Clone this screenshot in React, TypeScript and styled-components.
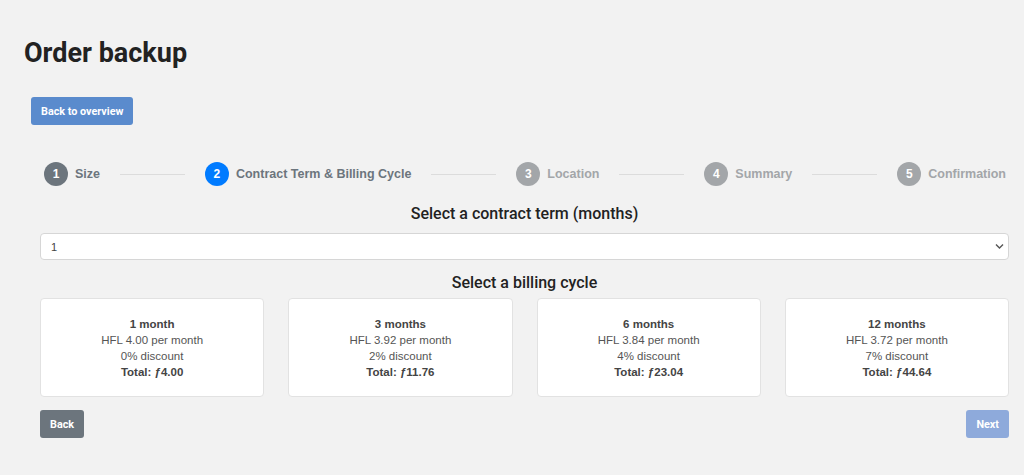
import React from "react";
import styled, { createGlobalStyle } from "styled-components";

const Global = createGlobalStyle`
  html, body { margin: 0; padding: 0; background: #f2f2f2; }
  body { font-family: "Liberation Sans", Arial, sans-serif; color: #212529; }
  * { box-sizing: border-box; }
`;

const Page = styled.div`
  padding: 34px 15px 0 24px;
  display: flex;
  flex-direction: column;
`;

const Title = styled.h1`
  margin: 0;
  font-family: "Roboto", "Noto Sans", sans-serif;
  font-size: 27px;
  font-weight: 700;
  color: #222;
  line-height: 38px;
`;

const Button = styled.button<{ $variant: "primary" | "secondary" | "disabled" }>`
  border: none;
  border-radius: 3px;
  font-family: "Roboto", "Noto Sans", sans-serif;
  font-size: 10.8px;
  font-weight: 700;
  color: #fff;
  height: 28px;
  padding: 0 10px;
  cursor: pointer;
  background: ${(p) =>
    p.$variant === "primary" ? "#5a8bcd" : p.$variant === "secondary" ? "#6c757d" : "#8eaadb"};
`;

const TopButtonRow = styled.div`
  margin-top: 25px;
  padding-left: 7px;
  display: flex;
`;

const Content = styled.div`
  margin-top: 35px;
  padding-left: 16px;
  display: flex;
  flex-direction: column;
`;

const Stepper = styled.div`
  display: flex;
  align-items: center;
  gap: 20px;
  padding: 0 3px 0 4px;
  height: 28px;
`;

const Step = styled.div`
  display: flex;
  align-items: center;
  gap: 7px;
`;

const Circle = styled.div<{ $state: "done" | "active" | "todo" }>`
  width: 24px;
  height: 24px;
  border-radius: 50%;
  display: flex;
  align-items: center;
  justify-content: center;
  color: #fff;
  font-size: 12px;
  font-weight: 700;
  background: ${(p) => (p.$state === "done" ? "#6c757d" : p.$state === "active" ? "#007bff" : "#a3a6a9")};
`;

const StepLabel = styled.span<{ $muted: boolean }>`
  font-size: 12.5px;
  font-weight: 700;
  color: ${(p) => (p.$muted ? "#a3a6a9" : "#6c757d")};
  white-space: nowrap;
`;

const Line = styled.div`
  flex: 1;
  height: 1px;
  background: #dcdcdc;
`;

const SectionTitle = styled.h2`
  margin: 0;
  text-align: center;
  font-family: "Roboto", "Noto Sans", sans-serif;
  font-size: 16px;
  font-weight: 500;
  color: #222;
  line-height: 20px;
`;

const SelectWrap = styled.div`
  position: relative;
  margin-top: 9px;
`;

const Select = styled.select`
  width: 100%;
  height: 27px;
  appearance: none;
  background: #fff;
  border: 1px solid #d6d6d6;
  border-radius: 4px;
  padding: 0 10px;
  font-family: "Liberation Sans", Arial, sans-serif;
  font-size: 11px;
  color: #444;
`;

const Chevron = styled.svg`
  position: absolute;
  right: 5px;
  top: 10px;
  pointer-events: none;
`;

const Cards = styled.div`
  margin-top: 5px;
  display: grid;
  grid-template-columns: repeat(4, 1fr);
  gap: 24px;
`;

const Card = styled.div`
  background: #fff;
  border: 1px solid #e2e2e2;
  border-radius: 4px;
  height: 99px;
  display: flex;
  flex-direction: column;
  align-items: center;
  justify-content: center;
  font-size: 11.5px;
  line-height: 16px;
  color: #555;
  padding-top: 1px;
`;

const Bold = styled.div`
  font-weight: 700;
  color: #444;
`;

const Footer = styled.div`
  margin-top: 13px;
  display: flex;
  justify-content: space-between;
`;

const Spacer = styled.div<{ $h: number }>`
  height: ${(p) => p.$h}px;
`;

const steps = ["Size", "Contract Term & Billing Cycle", "Location", "Summary", "Confirmation"];
const cards = [
  { m: "1 month", p: "4.00", d: "0%", t: "4.00" },
  { m: "3 months", p: "3.92", d: "2%", t: "11.76" },
  { m: "6 months", p: "3.84", d: "4%", t: "23.04" },
  { m: "12 months", p: "3.72", d: "7%", t: "44.64" },
];

export default function App() {
  const active = 1;
  return (
    <>
      <Global />
      <Page>
        <Title>Order backup</Title>
        <TopButtonRow>
          <Button $variant="primary">Back to overview</Button>
        </TopButtonRow>
        <Content>
          <Stepper>
            {steps.map((s, i) => (
              <React.Fragment key={s}>
                {i > 0 && <Line />}
                <Step>
                  <Circle $state={i < active ? "done" : i === active ? "active" : "todo"}>{i + 1}</Circle>
                  <StepLabel $muted={i > active}>{s}</StepLabel>
                </Step>
              </React.Fragment>
            ))}
          </Stepper>
          <Spacer $h={16} />
          <SectionTitle>Select a contract term (months)</SectionTitle>
          <SelectWrap>
            <Select defaultValue="1">
              <option value="1">1</option>
              <option value="3">3</option>
              <option value="6">6</option>
              <option value="12">12</option>
            </Select>
            <Chevron width="9" height="7" viewBox="0 0 9 7">
              <path d="M1 1.5 L4.5 5 L8 1.5" stroke="#555" strokeWidth="1.4" fill="none" />
            </Chevron>
          </SelectWrap>
          <Spacer $h={13} />
          <SectionTitle>Select a billing cycle</SectionTitle>
          <Cards>
            {cards.map((c) => (
              <Card key={c.m}>
                <Bold>{c.m}</Bold>
                <div>HFL {c.p} per month</div>
                <div>{c.d} discount</div>
                <Bold>Total: ƒ{c.t}</Bold>
              </Card>
            ))}
          </Cards>
          <Footer>
            <Button $variant="secondary">Back</Button>
            <Button $variant="disabled">Next</Button>
          </Footer>
        </Content>
      </Page>
    </>
  );
}
